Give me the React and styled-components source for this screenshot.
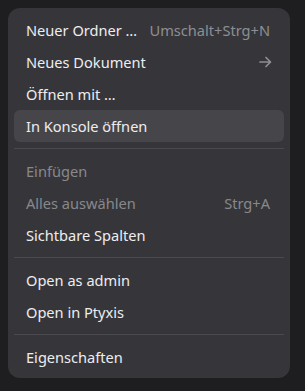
import React from "react";
import styled, { createGlobalStyle } from "styled-components";

const Global = createGlobalStyle`
  html, body {
    margin: 0;
    background: #1e1e20;
  }
  body {
    font-family: "Noto Sans", "Open Sans", sans-serif;
  }
`;

const Menu = styled.div`
  margin: 8px;
  width: 282px;
  box-sizing: border-box;
  padding: 6px 6px 5px;
  background: #36363a;
  border-radius: 12px;
  display: flex;
  flex-direction: column;
`;

const Item = styled.div`
  height: 32px;
  display: flex;
  align-items: center;
  justify-content: space-between;
  padding: 0 14px 0 12px;
  border-radius: 6px;
  font-size: 14.6px;
  color: ${(p) => (p.disabled ? "#88888c" : "#ededef")};
  background: ${(p) => (p.active ? "#46464a" : "transparent")};
`;

const Hint = styled.span`
  color: #8e8e92;
`;

const ArrowIcon = styled.svg`
  margin-right: -2px;
`;

const Separator = styled.div`
  height: 1px;
  margin: 6px 0;
  background: #4a4a4e;
`;

const Arrow = () => (
  <ArrowIcon width="13" height="12" viewBox="0 0 13 12" fill="none">
    <path
      d="M1 6h10.5M7 1.5L11.5 6L7 10.5"
      stroke="#8e8e92"
      strokeWidth="1.7"
      strokeLinecap="round"
      strokeLinejoin="round"
    />
  </ArrowIcon>
);

export default function App() {
  return (
    <>
      <Global />
      <Menu>
        <Item>
          <span>Neuer Ordner …</span>
          <Hint>Umschalt+Strg+N</Hint>
        </Item>
        <Item>
          <span>Neues Dokument</span>
          <Arrow />
        </Item>
        <Item>
          <span>Öffnen mit …</span>
        </Item>
        <Item active>
          <span>In Konsole öffnen</span>
        </Item>
        <Separator />
        <Item disabled>
          <span>Einfügen</span>
        </Item>
        <Item disabled>
          <span>Alles auswählen</span>
          <span>Strg+A</span>
        </Item>
        <Item>
          <span>Sichtbare Spalten</span>
        </Item>
        <Separator />
        <Item>
          <span>Open as admin</span>
        </Item>
        <Item>
          <span>Open in Ptyxis</span>
        </Item>
        <Separator />
        <Item>
          <span>Eigenschaften</span>
        </Item>
      </Menu>
    </>
  );
}
